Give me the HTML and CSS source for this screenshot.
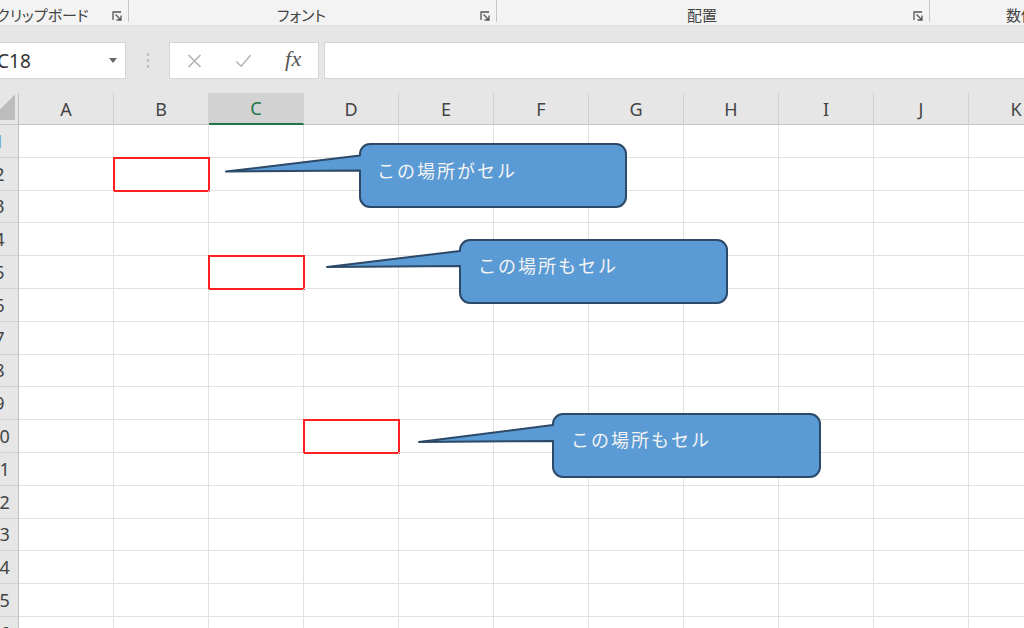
FILE: index.html
```html
<!DOCTYPE html>
<html lang="ja">
<head>
  <meta charset="UTF-8" />
  <title>セルとは</title>
  <link rel="stylesheet" href="styles.css">
</head>
<body>

  <!-- リボンのグループ名 -->
  <div class="ribbon">
    <div class="group clipboard">
      <span class="group-label">クリップボード</span>
      <svg class="launcher" viewBox="0 0 11 11"><path d="M1 9V1h8M3.5 3.5l5 5M4.5 9H9V4.5"/></svg>
    </div>
    <div class="group font">
      <span class="group-label">フォント</span>
      <svg class="launcher" viewBox="0 0 11 11"><path d="M1 9V1h8M3.5 3.5l5 5M4.5 9H9V4.5"/></svg>
    </div>
    <div class="group align">
      <span class="group-label">配置</span>
      <svg class="launcher" viewBox="0 0 11 11"><path d="M1 9V1h8M3.5 3.5l5 5M4.5 9H9V4.5"/></svg>
    </div>
    <div class="group number">
      <span class="group-label">数値</span>
    </div>
  </div>

  <!-- 数式バー -->
  <div class="formula-bar">
    <div class="name-box">
      <span>C18</span>
      <svg class="drop" viewBox="0 0 8 5"><path d="M0 0h8L4 5z"/></svg>
    </div>
    <div class="grip"><i></i><i></i><i></i></div>
    <div class="fx-box">
      <span class="fx-btn"><svg viewBox="0 0 16 16"><path d="M2 2l12 12M14 2L2 14"/></svg></span>
      <span class="fx-btn"><svg viewBox="0 0 18 16"><path d="M1.5 8.5l5 5L16.5 2"/></svg></span>
      <span class="fx-btn fx">fx</span>
    </div>
    <div class="formula-input"></div>
  </div>

  <!-- シート -->
  <div class="sheet">
    <div class="grid">
      <div class="corner"><span></span></div>
      <div class="col-head">A</div><div class="col-head">B</div><div class="col-head active">C</div><div class="col-head">D</div><div class="col-head">E</div><div class="col-head">F</div><div class="col-head">G</div><div class="col-head">H</div><div class="col-head">I</div><div class="col-head">J</div><div class="col-head">K</div>

      <div class="row-head first">1</div><div></div><div></div><div></div><div></div><div></div><div></div><div></div><div></div><div></div><div></div><div></div>
      <div class="row-head">2</div><div></div><div class="mark"></div><div></div><div></div><div></div><div></div><div></div><div></div><div></div><div></div><div></div>
      <div class="row-head">3</div><div></div><div></div><div></div><div></div><div></div><div></div><div></div><div></div><div></div><div></div><div></div>
      <div class="row-head">4</div><div></div><div></div><div></div><div></div><div></div><div></div><div></div><div></div><div></div><div></div><div></div>
      <div class="row-head">5</div><div></div><div></div><div class="mark"></div><div></div><div></div><div></div><div></div><div></div><div></div><div></div><div></div>
      <div class="row-head">6</div><div></div><div></div><div></div><div></div><div></div><div></div><div></div><div></div><div></div><div></div><div></div>
      <div class="row-head">7</div><div></div><div></div><div></div><div></div><div></div><div></div><div></div><div></div><div></div><div></div><div></div>
      <div class="row-head">8</div><div></div><div></div><div></div><div></div><div></div><div></div><div></div><div></div><div></div><div></div><div></div>
      <div class="row-head">9</div><div></div><div></div><div></div><div></div><div></div><div></div><div></div><div></div><div></div><div></div><div></div>
      <div class="row-head">10</div><div></div><div></div><div></div><div class="mark"></div><div></div><div></div><div></div><div></div><div></div><div></div><div></div>
      <div class="row-head">11</div><div></div><div></div><div></div><div></div><div></div><div></div><div></div><div></div><div></div><div></div><div></div>
      <div class="row-head">12</div><div></div><div></div><div></div><div></div><div></div><div></div><div></div><div></div><div></div><div></div><div></div>
      <div class="row-head">13</div><div></div><div></div><div></div><div></div><div></div><div></div><div></div><div></div><div></div><div></div><div></div>
      <div class="row-head">14</div><div></div><div></div><div></div><div></div><div></div><div></div><div></div><div></div><div></div><div></div><div></div>
      <div class="row-head">15</div><div></div><div></div><div></div><div></div><div></div><div></div><div></div><div></div><div></div><div></div><div></div>
      <div class="row-head">16</div><div></div><div></div><div></div><div></div><div></div><div></div><div></div><div></div><div></div><div></div><div></div>
    </div>

    <!-- 吹き出し（シート上に自由配置） -->
    <svg class="callouts" viewBox="0 93 1024 535">
      <path d="M370 144H616A10 10 0 0 1 626 154V197A10 10 0 0 1 616 207H370A10 10 0 0 1 360 197V170.5L226 171.5L360 155.5V154A10 10 0 0 1 370 144Z"/>
      <text x="377" y="177.5">この場所がセル</text>

      <path d="M470 240H717A10 10 0 0 1 727 250V293A10 10 0 0 1 717 303H470A10 10 0 0 1 460 293V266L327 267L460 251V250A10 10 0 0 1 470 240Z"/>
      <text x="478" y="273">この場所もセル</text>

      <path d="M563 414H810A10 10 0 0 1 820 424V467A10 10 0 0 1 810 477H563A10 10 0 0 1 553 467V441L419 442L553 425V424A10 10 0 0 1 563 414Z"/>
      <text x="571" y="447">この場所もセル</text>
    </svg>
  </div>

</body>
</html>
```

FILE: styles.css
```css
/* Reset */
* {
  margin: 0; padding: 0; box-sizing: border-box;
}
html, body {
  width: 1024px;
  height: 628px;
  overflow: hidden;
  background: #fff;
  font-family: "Noto Sans", "Noto Sans CJK JP", sans-serif;
  color: #444;
}

/* リボン */
.ribbon {
  display: flex;
  height: 26px;
  background: #f3f3f3;
  border-bottom: 1px solid #dcdcdc;
  white-space: nowrap;
}
.group {
  display: flex;
  flex-shrink: 0;
  align-items: center;
  height: 22px;
  padding-top: 8px;
  border-right: 1px solid #c6c6c6;
}
.group-label {
  flex: 1;
  text-align: center;
  font-family: "Noto Sans CJK JP", sans-serif;
  font-feature-settings: "palt";
  font-size: 15px;
  line-height: 14px;
  color: #444;
}
.launcher {
  width: 11px;
  height: 11px;
  margin: 2px 5px 0 6px;
  fill: none;
  stroke: #555;
  stroke-width: 1.3;
}
.group.clipboard { width: 150px; margin-left: -21px; }
.group.font { width: 368px; }
.group.align { width: 433px; }
.group.number { border-right: none; padding-left: 76px; }
.group.number .group-label { flex: none; }

/* 数式バー */
.formula-bar {
  display: flex;
  height: 67px;
  padding: 16px 0 14px;
  background: #e6e6e6;
}
.name-box {
  display: flex;
  align-items: center;
  justify-content: space-between;
  width: 136px;
  margin-left: -10px;
  padding: 0 8px 0 6px;
  background: #fff;
  border: 1px solid #d6d6d6;
  font-size: 19px;
  color: #333;
}
.drop {
  width: 8px;
  height: 5px;
  fill: #666;
}
.grip {
  display: flex;
  flex-direction: column;
  align-items: center;
  justify-content: center;
  gap: 3px;
  width: 43px;
}
.grip i {
  width: 2px;
  height: 3px;
  background: #bdbdbd;
}
.fx-box {
  display: flex;
  width: 150px;
  background: #fff;
  border: 1px solid #d6d6d6;
}
.fx-btn {
  display: flex;
  align-items: center;
  justify-content: center;
  width: 50px;
}
.fx-btn svg {
  width: 17px;
  height: 16px;
  fill: none;
  stroke: #b3b3b3;
  stroke-width: 1.6;
}
.fx-btn.fx {
  font-family: "Liberation Serif", serif;
  font-style: italic;
  font-size: 22px;
  color: #555;
  letter-spacing: 0.5px;
  padding-bottom: 3px;
}
.formula-input {
  flex: 1;
  margin-left: 5px;
  background: #fff;
  border: 1px solid #d6d6d6;
  border-right: none;
}

/* シート */
.sheet {
  position: relative;
  height: 535px;
  overflow: hidden;
}
.grid {
  display: grid;
  grid-template-columns: 38px repeat(11, 95px);
  grid-template-rows: 32px;
  grid-auto-rows: 32.8px;
  margin-left: -19px;
  width: 1083px;
}
.grid > div {
  border-right: 1px solid #e1e1e1;
  border-bottom: 1px solid #e1e1e1;
}
.grid > .corner {
  display: flex;
  justify-content: flex-end;
  align-items: flex-end;
  padding: 0 3px 4px 0;
  background: #e6e6e6;
  border-right: 1px solid #bfbfbf;
  border-bottom: 1px solid #c6c6c6;
}
.corner span {
  width: 26px;
  height: 26px;
  background: linear-gradient(to bottom right, transparent 50%, #bdbdbd 50%);
}
.grid > .col-head {
  display: flex;
  align-items: center;
  justify-content: center;
  background: #e6e6e6;
  border-right: 1px solid #d0d0d0;
  border-bottom: 1px solid #c6c6c6;
  font-size: 18px;
  color: #444;
}
.grid > .col-head.active {
  background: #d2d2d2;
  border-bottom: 2px solid #217346;
  color: #217346;
}
.grid > .row-head {
  display: flex;
  align-items: center;
  justify-content: center;
  background: #e6e6e6;
  border-right: 1px solid #bfbfbf;
  border-bottom: 1px solid #d0d0d0;
  font-size: 18px;
  color: #444;
}
.grid > .row-head.first {
  color: #6a9fd4;
}
.grid > .mark {
  outline: 2px solid #ff2020;
  outline-offset: -1px;
}

/* 吹き出し */
.callouts {
  position: absolute;
  top: 0;
  left: 0;
  width: 1024px;
  height: 535px;
}
.callouts path {
  fill: #5b9bd5;
  stroke: #2c4968;
  stroke-width: 2;
  stroke-linejoin: round;
}
.callouts text {
  font-family: "Noto Sans CJK JP", sans-serif;
  font-size: 18px;
  letter-spacing: 2px;
  fill: #f4f4f4;
}
```
